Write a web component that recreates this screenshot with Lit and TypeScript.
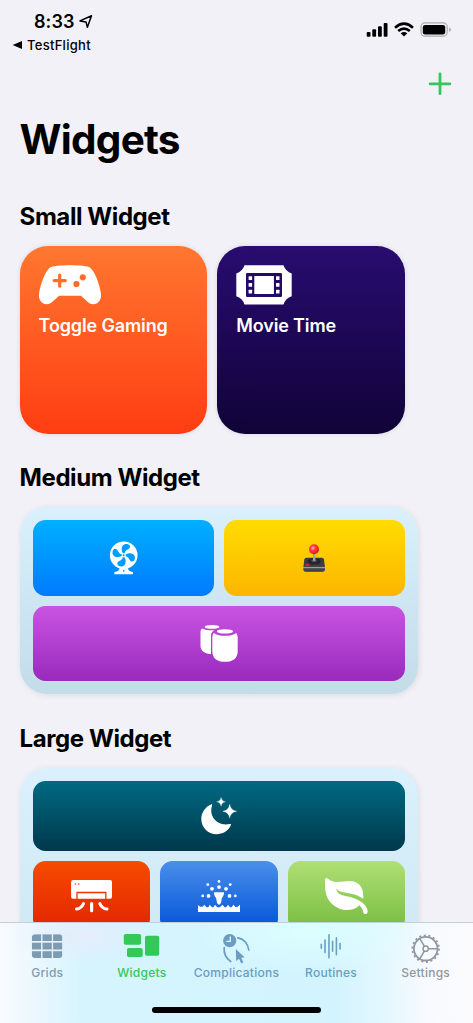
import { LitElement, html, css, svg } from "lit";
import { customElement, property } from "lit/decorators.js";

const frame = (x: number, y: number, w: number, h: number, body: unknown) => html`
  <svg width=${w} height=${h} viewBox="${x} ${y} ${w} ${h}" fill="currentColor" aria-hidden="true">${body}</svg>`;

const line = (d: string, w: number) =>
  svg`<path d=${d} fill="none" stroke="currentColor" stroke-width=${w} stroke-linecap="round" stroke-linejoin="round"/>`;

const rect = (x: number, y: number, w: number, h: number, r = 0, fill = "currentColor") =>
  svg`<rect x=${x} y=${y} width=${w} height=${h} rx=${r} fill=${fill}/>`;

const dot = (x: number, y: number, r: number, fill = "currentColor") =>
  svg`<circle cx=${x} cy=${y} r=${r} fill=${fill}/>`;

const star = (x: number, y: number, r: number) => {
  const k = r * 0.2;
  return svg`<path d="M${x} ${y - r}Q${x + k * 0.6} ${y - k * 0.6} ${x + r} ${y}Q${x + k * 0.6} ${y + k * 0.6} ${x} ${y + r}Q${x - k * 0.6} ${y + k * 0.6} ${x - r} ${y}Q${x - k * 0.6} ${y - k * 0.6} ${x} ${y - r}Z" stroke="currentColor" stroke-width=".3"/>`;
};

const gamepad = () => frame(38, 264, 64, 42, svg`
  <path d="M50 267.6C54 264.6 86 264.6 90 267.6C95 271.6 99.8 285 101 294C101.8 300 98 304.2 93.5 304.2C89 304.2 87 301 81 295.7H59C53 301 51 304.2 46.5 304.2C42 304.2 38.2 300 39 294C40.2 285 45 271.6 50 267.6Z"/>
  <path d="M59.7 275V286.2M54.1 280.6H65.3" stroke="#ff6d2c" stroke-width="3.2" stroke-linecap="round"/>
  ${dot(76.4, 284, 3.1, "#ff6a2a")}${dot(82.8, 277.3, 3.1, "#ff6d2c")}`);

const film = () => frame(235, 264, 58, 42, svg`
  <path d="M244.5 265.3H283.5Q285.5 271.5 291.7 273.5V296.2Q285.5 298.2 283.5 304.4H244.5Q242.5 298.2 236.3 296.2V273.5Q242.5 271.5 244.5 265.3Z"/>
  ${rect(246, 273, 36, 24, 1.2, "#240a67")}
  ${rect(254.3, 276, 19.6, 18)}
  ${[276.2, 282.9, 289.7].map((y) => svg`${rect(248.6, y, 3.5, 3.8, 0.5)}${rect(276, y, 3.5, 3.8, 0.5)}`)}`);

const fan = () => frame(108, 541, 30, 34, svg`
  ${dot(123.7, 555.2, 13.8)}
  <path d="M119.5 568H128Q128 571.3 133 572.2V574.3H114.3V572.2Q119.5 571.3 119.5 568Z"/>
  ${dot(123.7, 570.9, 0.8, "#0090ff")}
  ${[0, 90, 180, 270].map((a) => svg`
    <path fill="#009cff" transform="rotate(${a} 123.7 555.2)" d="M122.9 553.2C120.8 550 121.5 544.5 125.4 544C129.5 543.6 131.2 546.5 129.2 548.6C127 550.3 125.3 550.3 124.7 553.2Z"/>`)}
  ${dot(123.7, 555.2, 1, "#0098ff")}`);

const joystick = () => frame(302, 543, 24, 30, svg`
  <defs>
    <linearGradient id="base" x1="0" y1="0" x2="0" y2="1"><stop offset="0" stop-color="#3c3b42"/><stop offset=".62" stop-color="#3d3c43"/><stop offset=".7" stop-color="#9c9ba1"/><stop offset=".78" stop-color="#4e4d53"/><stop offset="1" stop-color="#34343a"/></linearGradient>
    <radialGradient id="ball" cx=".4" cy=".38" r=".6"><stop offset="0" stop-color="#ffb0b0"/><stop offset=".4" stop-color="#ff4144"/><stop offset="1" stop-color="#e0151d"/></radialGradient>
  </defs>
  <path fill="url(#base)" d="M306.5 557.7H321.8Q323.6 557.7 324 559.5L325 567.5V569.5Q325 571.7 322.5 571.7H305.8Q303.3 571.7 303.3 569.5V567.5L304.3 559.5Q304.7 557.7 306.5 557.7Z"/>
  <ellipse cx="314.2" cy="561.3" rx="6.6" ry="3.3" fill="#25262b"/>
  <path d="M311 560.8Q314.2 557 317.3 560.8Q314.2 563.5 311 560.8Z" fill="#54555c"/>
  ${rect(313, 553, 2.4, 8, 1, "#a7a19a")}
  <ellipse cx="307.4" cy="565" rx="2.1" ry="1.2" fill="#f01820"/>
  ${dot(314, 549.3, 5, "url(#ball)")}`);

const speakers = () => frame(200, 625, 38, 38, svg`
  <ellipse cx="212" cy="626.9" rx="7.3" ry="1.9"/>
  <path d="M201.8 628.6C206 630.6 211 630.5 214.5 630.2C212 631.5 211.1 633 211 635.5V654C206 654 200.7 651.5 200.5 646V632Q200.5 629.8 201.8 628.6Z"/>
  <ellipse cx="225" cy="631.4" rx="8.2" ry="2.2"/>
  <path d="M213.7 633C219 636.8 231 636.8 236.3 633Q237.7 634.6 237.7 638V651C237.7 658.5 233 661.8 225 661.8S212.3 658.5 212.3 651V638Q212.3 634.6 213.7 633Z"/>`);

const moon = () => frame(200, 796, 38, 39, svg`
  <path d="M211 804.5C212.3 804 212.3 804.8 212 805.8C208.5 816.5 217.5 826.5 229.5 824C231 823.6 231.3 824.2 230.7 825.5C228 831 222.5 834.2 216.5 834.2C208 834.2 201.3 827.5 201.3 819C201.3 812.5 205.3 806.8 211 804.5Z"/>
  ${star(221.1, 801.8, 4.4)}${star(229.7, 811.2, 7)}`);

const airCon = () => frame(70, 879, 42, 34, svg`
  ${rect(71.1, 880, 40.9, 18.8, 2)}
  <path d="M77 899V892.5H105.8V899" fill="none" stroke="#f03300" stroke-width="1.3"/>
  ${dot(75.4, 884, 0.8, "#f03c00")}${dot(78.8, 884, 0.8, "#f03c00")}
  ${line("M91.6 903.5V910.7", 3.2)}
  ${line("M83.5 903.5Q81.3 908.3 76.5 909", 3)}
  ${line("M99.8 903.5Q102 908.3 107 909", 3)}`);

const sprinkler = () => frame(198, 879, 42, 34, svg`
  ${[
    [219, 881.4, 1.3], [219, 887.1, 1.9], [212, 888.8, 1.9], [226, 888.8, 1.9], [207.8, 884.6, 1.4],
    [230.2, 884.6, 1.4], [208.5, 895.9, 1.9], [229.5, 895.9, 1.9], [202.7, 895.9, 1.4], [235.3, 895.9, 1.4],
  ].map(([x, y, r]) => dot(x, y, r))}
  <path d="M214.8 892.3H223.2Q224.4 892.3 224 893.5Q223.7 896 221.8 898.3L221 903L219 905L217 903L216.2 898.3Q214.3 896 214 893.5Q213.6 892.3 214.8 892.3Z"/>
  <path d="M198 905L200.3 906.8L202.5 906.8L204.3 904.8L206.5 907.2L208.3 907.2L209.8 904.8L212 907.2H213.5L215 904.8L217.3 907.2H219.8L222.5 904.8L224.5 907.2H226.2L228 904.8L230 907.2H231.5L233.5 904.8L235.5 907H237.2L240 904.8V912H198Z"/>`);

const leaf = () => frame(324, 877, 45, 38, svg`
  <path d="M326 878C328 878 330 881.4 336 882C341 882.3 346 880.7 352 881.2C359.5 882 364 888 363.2 898.8C358 895 353 893.7 347 892.9C341.5 892 338.5 891.5 337.4 889.6C336.6 888.7 336.2 889.3 336.6 890.3C337.7 893.5 341 895.6 348 896.6C358.5 898.5 367 904.5 367.7 911C367.9 914.7 363.6 915.2 363.2 912C362.7 909 361.3 907 359.5 905.2C354 911 344 911.2 338 908C328 903 325 894 325.1 886C325.1 882 324.5 878 326 878Z"/>`);

const gridTab = () => frame(31, 933, 32, 31, svg`
  <clipPath id="gc"><rect x="31.8" y="934.2" width="30.6" height="23.8" rx="3.5"/></clipPath>
  <g clip-path="url(#gc)">
    ${[934.2, 942.7, 951.2].map((y) => [31.8, 42.5, 53.1].map((x) => rect(x, y, 9.3, 6.8)))}
  </g>`);

const widgetTab = () => frame(123, 933, 37, 31, svg`
  ${rect(123.8, 934, 17.3, 10.8, 1.8)}${rect(145, 935.7, 14.2, 20, 1.8)}${rect(127, 948, 15.7, 9, 1.8)}`);

const complicationTab = () => frame(222, 933, 28, 31, svg`
  ${dot(229.7, 940.7, 6.6)}
  <path d="M230.3 936.5V941.3H226.3" fill="none" stroke="#dcf8fe" stroke-width="1.3"/>
  ${line("M224.2 947.5C223.6 953.5 226 958.3 230.7 961.5", 1.7)}
  ${line("M237.8 937.8C243.5 938.5 248 943.5 248.8 950", 1.7)}
  <path d="M235.8 949L244.6 957.2L241.3 957.7L243.3 962.5L241.2 963.5L239.1 958.8L236.2 961Z"/>`);

const waveTab = () => frame(318, 933, 26, 31, svg`
  ${[[321.3, 1.9], [325, 6.3], [329, 11.4], [332.6, 4.9], [336.4, 8.4], [340, 2.7]].map(([x, h]) =>
    line(`M${x} ${946.3 - h}V${946.3 + h}`, 1.6))}`);

const gearTab = () => frame(411, 933, 30, 31, svg`
  <g fill="none" stroke="currentColor">
    <circle cx="425.7" cy="948.7" r="11.8" stroke-width="1.8"/>
    <circle cx="425.7" cy="948.7" r="13.3" stroke-width="1.8" stroke-dasharray="2 2.643"/>
    <circle cx="425.7" cy="948.7" r="2.6" stroke-width="1.5"/>
    <path d="M428.3 948.7H437.5M424.4 946.4L419.7 938.4M424.4 951L419.7 959" stroke-width="1.5"/>
  </g>`);

@customElement("icon-tile")
class IconTile extends LitElement {
  @property() tone = "blue";
  static styles = css`
    :host { display: flex; min-width: 0; }
    .tile { flex: 1; display: flex; align-items: center; justify-content: center; border-radius: 12.5px; color: #fff; }
    .blue { background: linear-gradient(#00b0ff, #007aff); }
    .yellow { background: linear-gradient(#ffdc00, #fcb600); }
    .purple { background: linear-gradient(#ca54e2, #982abc); }
    .teal { background: linear-gradient(#006a82, #00384c); }
    .red { background: linear-gradient(#f64b00, #e22400); }
    .ocean { background: linear-gradient(#4b8fea, #0052d8); }
    .green { background: linear-gradient(#afe074, #76bb40); }
  `;
  render() {
    return html`<div class="tile ${this.tone}"><slot></slot></div>`;
  }
}

@customElement("app-root")
class AppRoot extends LitElement {
  static styles = css`
    :host {
      display: flex; flex-direction: column; width: 473px; height: 1023px; overflow: hidden;
      background: #f2f1f7; color: #000; font-family: Inter, "Liberation Sans", sans-serif;
    }
    * { box-sizing: border-box; }
    svg { display: block; flex: none; }
    .status { height: 60px; flex: none; display: flex; justify-content: space-between; padding: 0 21px 0 12px; }
    .clock { display: flex; align-items: center; gap: 4px; padding: 11px 0 0 22px; height: 33px; font-size: 18px; font-weight: 600; line-height: 22px; letter-spacing: .1px; }
    .back { display: flex; align-items: center; gap: 4px; height: 24px; font-size: 13px; font-weight: 500; letter-spacing: .28px; }
    .radios { display: flex; gap: 6px; padding-top: 21px; }
    .toolbar { height: 48px; flex: none; display: flex; justify-content: flex-end; padding: 12px 21px 0 0; color: #34c759; }
    .scroll { flex: 1; min-height: 0; overflow: hidden; padding: 0 19.6px; }
    h1 { margin: 0; height: 63px; font-size: 40.5px; line-height: 64px; font-weight: 700; letter-spacing: -.76px; }
    h2 { margin: 0; font-size: 24px; line-height: 30px; height: 30px; font-weight: 700; letter-spacing: -.42px; white-space: nowrap; }
    .first { margin-top: 31px; }
    .next { margin-top: 29px; }
    .pair { display: flex; gap: 10px; margin-top: 14px; }
    .small { width: 187.7px; height: 188px; border-radius: 28px; padding: 18px 19px; color: #fff; box-shadow: 0 0 5px #0000001c; display: flex; flex-direction: column; align-items: flex-start; gap: 7px; }
    .small svg { margin-left: -1px; }
    .orange { background: linear-gradient(#ff7730, #ff3d12); }
    .indigo { background: linear-gradient(#280c70, #110337); }
    .name { font-size: 18px; line-height: 25px; font-weight: 600; letter-spacing: -.14px; white-space: nowrap; }
    .panel { margin-top: 14px; width: 398.4px; padding: 13px; border-radius: 27px; display: grid; gap: 10px; background: linear-gradient(#daf0fd, #c2dce8); box-shadow: 1px 1px 6px #00000018; }
    .medium { height: 187.4px; margin-bottom: 29.6px; grid-template-columns: 1fr 1fr; grid-template-rows: 1fr 1fr; }
    .medium + .next { margin-top: 0; }
    .large { height: 418px; grid-template-columns: repeat(3, 1fr); grid-template-rows: 70px 70px 1fr; }
    .wide { grid-column: 1 / -1; }
    .tabs {
      height: 101px; flex: none; border-top: 1px solid #c3d0d9; display: flex; flex-direction: column; align-items: center;
      background:
        radial-gradient(ellipse 70px 30px at 82px 12px, #e6edfb 0%, #e6edfb00 100%),
        radial-gradient(ellipse 130px 44px at 310px 8px, #dcfffe 0%, #dcfffe00 100%),
        linear-gradient(90deg, #f8fbff 0, #edf8fd 30px, #d5f4fe 85px, #d3f4fe 335px, #e4f7fe 385px, #f7fafe 425px, #fbfbfd 473px);
    }
    .row { display: flex; width: 100%; height: 84px; }
    .tab { flex: 1; min-width: 0; display: flex; flex-direction: column; align-items: center; padding-top: 10px; gap: 1px; font-size: 12px; font-weight: 500; line-height: 16px; letter-spacing: .26px; }
    .slate { color: #7e9bb4; }
    .active { color: #34c759; }
    .steel { color: #6b9cc3; }
    .sea { color: #689fc0; }
    .gray { color: #9297a0; }
    .home { width: 168.5px; height: 6px; border-radius: 3px; background: #000; }
  `;

  render() {
    return html`
      <div class="status">
        <div>
          <div class="clock">8:33${frame(79, 15, 14, 14, svg`<path d="M91.5 15.8L80 20.9L86 21.9L87.4 27.2Z" fill="none" stroke="currentColor" stroke-width="1.5" stroke-linejoin="round"/>`)}</div>
          <div class="back">${frame(12, 40, 11, 10, svg`<path d="M12.7 45L22 41V49Z"/>`)}TestFlight</div>
        </div>
        <div class="radios">
          ${frame(366, 21, 22, 17, svg`${rect(366.7, 32, 3.8, 4.7, 1)}${rect(372.3, 29.3, 3.8, 7.4, 1)}${rect(378, 26.3, 3.8, 10.4, 1)}${rect(383.7, 23, 3.8, 13.7, 1)}`)}
          ${frame(394, 21, 20, 17, svg`
            <path d="M395 27.7Q404 19.7 413 27.7M398.2 31.1Q404 26.2 409.8 31.1" fill="none" stroke="currentColor" stroke-width="2.6"/>
            <path d="M404 36.5L400.7 33.3Q404 30.8 407.3 33.3Z"/>`)}
          ${frame(420, 21, 32, 17, svg`
            <rect x="421" y="22.9" width="26.2" height="13.3" rx="4" fill="none" stroke="#aaa9af" stroke-width="1.2"/>
            ${rect(422.8, 24.9, 22.4, 9.7, 2.3)}<path d="M449.2 27.5Q451 28.2 451 29.7T449.2 31.9Z" fill="#aaa9af"/>`)}
        </div>
      </div>
      <div class="toolbar">${frame(428, 72, 24, 24, line("M440 73.9V93.7M430.1 83.8H449.9", 2.8))}</div>
      <div class="scroll">
        <h1>Widgets</h1>
        <h2 class="first">Small Widget</h2>
        <div class="pair">
          <div class="small orange">${gamepad()}<div class="name">Toggle Gaming</div></div>
          <div class="small indigo">${film()}<div class="name">Movie Time</div></div>
        </div>
        <h2 class="next">Medium Widget</h2>
        <div class="panel medium">
          <icon-tile tone="blue">${fan()}</icon-tile>
          <icon-tile tone="yellow">${joystick()}</icon-tile>
          <icon-tile class="wide" tone="purple">${speakers()}</icon-tile>
        </div>
        <h2 class="next">Large Widget</h2>
        <div class="panel large">
          <icon-tile class="wide" tone="teal">${moon()}</icon-tile>
          <icon-tile tone="red">${airCon()}</icon-tile>
          <icon-tile tone="ocean">${sprinkler()}</icon-tile>
          <icon-tile tone="green">${leaf()}</icon-tile>
          <icon-tile class="wide" tone="blue"></icon-tile>
        </div>
      </div>
      <div class="tabs">
        <div class="row">
          <div class="tab slate">${gridTab()}<span>Grids</span></div>
          <div class="tab active">${widgetTab()}<span>Widgets</span></div>
          <div class="tab steel">${complicationTab()}<span>Complications</span></div>
          <div class="tab sea">${waveTab()}<span>Routines</span></div>
          <div class="tab gray">${gearTab()}<span>Settings</span></div>
        </div>
        <div class="home"></div>
      </div>`;
  }
}
